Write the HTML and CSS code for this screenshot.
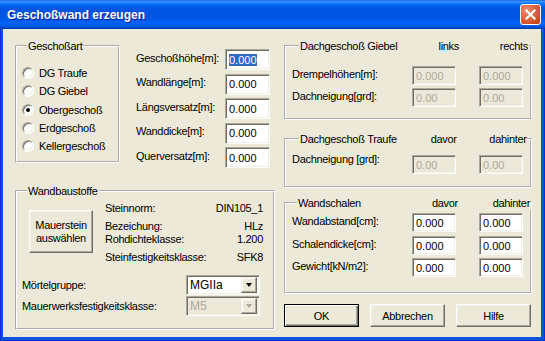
FILE: index.html
```html
<!DOCTYPE html>
<html>
<head>
<meta charset="utf-8">
<link rel="stylesheet" href="styles.css">
</head>
<body>
<div class="window">
  <div class="titlebar">
    <span class="title">Geschoßwand erzeugen</span>
    <span class="close"><svg width="19" height="19" viewBox="0 0 19 19"><path d="M5.5 5.5 L13.5 13.5 M13.5 5.5 L5.5 13.5" stroke="#fff" stroke-width="2.2" stroke-linecap="square"/></svg></span>
  </div>
  <div class="frame">
    <div class="client">
      <div class="col-left">
        <div class="top-left">
          <fieldset class="group g-art">
            <legend class="lg-art">Geschoßart</legend>
            <div class="radio"><span class="rb"></span><span>DG Traufe</span></div>
            <div class="radio"><span class="rb"></span><span>DG Giebel</span></div>
            <div class="radio"><span class="rb on"></span><span>Obergeschoß</span></div>
            <div class="radio"><span class="rb"></span><span>Erdgeschoß</span></div>
            <div class="radio"><span class="rb"></span><span>Kellergeschoß</span></div>
          </fieldset>
          <div class="fields">
            <div class="frow"><span class="flabel">Geschoßhöhe[m]:</span><span class="edit big"><span class="sel">0.000</span></span></div>
            <div class="frow"><span class="flabel">Wandlänge[m]:</span><span class="edit big">0.000</span></div>
            <div class="frow"><span class="flabel">Längsversatz[m]:</span><span class="edit big">0.000</span></div>
            <div class="frow"><span class="flabel">Wanddicke[m]:</span><span class="edit big">0.000</span></div>
            <div class="frow"><span class="flabel">Querversatz[m]:</span><span class="edit big">0.000</span></div>
          </div>
        </div>
        <fieldset class="group g-wb">
          <legend class="lg-art">Wandbaustoffe</legend>
          <div class="wb-top">
            <div class="btn btn-mauer">Mauerstein<br>auswählen</div>
            <div class="info">
              <div class="irow ir1"><span>Steinnorm:</span><span>DIN105_1</span></div>
              <div class="irow ir2"><span>Bezeichung:</span><span>HLz</span></div>
              <div class="irow ir3"><span>Rohdichteklasse:</span><span>1.200</span></div>
              <div class="irow ir4"><span>Steinfestigkeitsklasse:</span><span>SFK8</span></div>
            </div>
          </div>
          <div class="crow cr1"><span class="clabel">Mörtelgruppe:</span><div class="combo"><span class="ctext">MGIIa</span><span class="cbtn"><span class="tri"></span></span></div></div>
          <div class="crow cr2"><span class="clabel">Mauerwerksfestigkeitsklasse:</span><div class="combo dis"><span class="ctext">M5</span><span class="cbtn"><span class="tri"></span></span></div></div>
        </fieldset>
      </div>
      <div class="col-right">
        <fieldset class="group g-giebel">
          <legend class="lg lg-giebel"><span class="lt">Dachgeschoß Giebel</span><span class="lc1">links</span><span class="lc2">rechts</span></legend>
          <div class="rrow rr-d1"><span class="rlabel">Drempelhöhen[m]:</span><span class="edit dis">0.000</span><span class="edit dis">0.000</span></div>
          <div class="rrow rr-d2"><span class="rlabel">Dachneigung[grd]:</span><span class="edit dis">0.00</span><span class="edit dis">0.00</span></div>
        </fieldset>
        <fieldset class="group g-traufe">
          <legend class="lg lg-traufe"><span class="lt">Dachgeschoß Traufe</span><span class="lc1">davor</span><span class="lc2">dahinter</span></legend>
          <div class="rrow rr-t1"><span class="rlabel">Dachneigung [grd]:</span><span class="edit dis">0.00</span><span class="edit dis">0.00</span></div>
        </fieldset>
        <fieldset class="group g-schalen">
          <legend class="lg lg-schalen"><span class="lt">Wandschalen</span><span class="lc1">davor</span><span class="lc2">dahinter</span></legend>
          <div class="rrow rr-s1"><span class="rlabel">Wandabstand[cm]:</span><span class="edit">0.000</span><span class="edit">0.000</span></div>
          <div class="rrow rr-s2"><span class="rlabel">Schalendicke[cm]:</span><span class="edit">0.000</span><span class="edit">0.000</span></div>
          <div class="rrow rr-s3"><span class="rlabel">Gewicht[kN/m2]:</span><span class="edit">0.000</span><span class="edit">0.000</span></div>
        </fieldset>
        <div class="buttons">
          <div class="btn btn-ok">OK</div>
          <div class="btn">Abbrechen</div>
          <div class="btn">Hilfe</div>
        </div>
      </div>
    </div>
  </div>
</div>
</body>
</html>
```
FILE: styles.css
```css
* { box-sizing: border-box; }
html, body { margin: 0; padding: 0; }
body {
  width: 545px; height: 341px; overflow: hidden;
  font-family: "Liberation Sans", Arial, sans-serif;
  font-size: 11px; color: #000; letter-spacing: -0.3px;
  white-space: nowrap;
  background: #0855dd;
}
.window { width: 545px; height: 341px; display: flex; flex-direction: column; }
.titlebar {
  height: 29px; flex: none;
  display: flex; align-items: center; justify-content: space-between;
  padding: 0 4px 0 7px;
  background: linear-gradient(to bottom, #0a5ee8 0%, #3d95ff 4%, #2a8cff 8%, #0f75fb 12%, #0266f0 18%, #0058e6 26%, #0054e3 40%, #0055e6 60%, #005cf0 72%, #0364f6 82%, #0059e8 90%, #0047c4 96%, #003aa8 100%);
}
.title {
  color: #fff; font-weight: bold; font-size: 12px; letter-spacing: 0;
  text-shadow: 1px 1px 0 #0f1f8c;
  padding-top: 1px;
}
.close {
  width: 21px; height: 21px; display: flex; align-items: center; justify-content: center;
  border: 1px solid #fff; border-radius: 3px;
  background: radial-gradient(circle at 30% 30%, #ec8f72 0%, #de6a45 40%, #cc4a22 80%, #b93c18 100%);
}
.close svg { display: block; }
.frame {
  flex: 1; padding: 0 4px 4px 3px;
  background: #0855dd;
  box-shadow: inset 1px 0 0 #0831d9, inset -1px 0 0 #0831d9, inset 0 -1px 0 #0831d9;
}
.client {
  width: 538px; height: 308px;
  background: #ece9d8;
  display: flex; gap: 9px;
  padding: 10px 0 0 12px;
}
.col-left { width: 260px; display: flex; flex-direction: column; }
.col-right { width: 248px; display: flex; flex-direction: column; }
.top-left { display: flex; }

.group {
  margin: 0; padding: 0; min-width: 0;
  border: 2px groove #fff;
}
.group legend {
  line-height: 14px; height: 14px; padding: 0 1px; font-size: 11px;
}
.lg-art { margin-left: 5px; }

.g-art { width: 105px; height: 124px; padding: 11px 0 0 5px; }
.radio { display: flex; align-items: center; height: 18.3px; gap: 5px; }
.rb {
  width: 12px; height: 12px; border-radius: 50%; flex: none;
  background: #fff; position: relative;
  border: 1px solid; border-color: #aca899 #fff #fff #aca899;
  box-shadow: inset 1px 1px 0 #716f64, inset -1px -1px 0 #f1efe2;
}
.rb.on::after {
  content: ""; position: absolute; left: 3px; top: 3px; width: 4px; height: 4px;
  border-radius: 50%; background: #000;
}

.fields { margin-left: 16px; margin-top: 10px; display: flex; flex-direction: column; gap: 3.5px; }
.frow { display: flex; align-items: center; height: 21px; }
.flabel { width: 89px; margin-top: -4px; }

.edit {
  display: flex; align-items: center;
  width: 44px; height: 19px; padding: 0 0 0 3px;
  background: #fff; letter-spacing: 0;
  border: 1px solid; border-color: #aca899 #fff #fff #aca899;
  box-shadow: inset 1px 1px 0 #716f64, inset -1px -1px 0 #f1efe2;
}
.edit.big { width: 45px; height: 21px; }
.edit.dis { background: #ece9d8; color: #aca899; }
.sel { background: #316ac5; color: #fff; }

.g-wb { width: 260px; height: 146px; margin-top: 16px; padding: 0 0 0 5px; }
.wb-top { display: flex; }
.btn {
  display: flex; align-items: center; justify-content: center; text-align: center;
  background: #ece9d8;
  border: 1px solid; border-color: #fff #716f64 #716f64 #fff;
  box-shadow: inset -1px -1px 0 #aca899, inset 1px 1px 0 #f1efe2;
  width: 75px; height: 23px;
}
.btn-mauer { width: 64px; height: 43px; margin: 12px 0 0 7px; line-height: 13px; }
.info { width: 158px; margin-left: 12px; }
.irow { display: flex; justify-content: space-between; height: 13px; line-height: 13px; }
.ir1 { margin-top: 4px; }
.ir2 { margin-top: 5px; }
.ir3 { margin-top: 0; }
.ir4 { margin-top: 5px; }
.crow { display: flex; align-items: center; justify-content: space-between; width: 238px; }
.cr1 { margin-top: 11px; }
.cr2 { margin-top: 1px; }
.combo {
  width: 74px; height: 20px; display: flex; align-items: center; justify-content: space-between;
  padding: 2px 2px 2px 3px; background: #fff;
  border: 1px solid; border-color: #aca899 #fff #fff #aca899;
  box-shadow: inset 1px 1px 0 #716f64, inset -1px -1px 0 #f1efe2;
  font-size: 12px; letter-spacing: 0;
}
.combo.dis { background: #ece9d8; color: #aca899; }
.cbtn {
  width: 16px; height: 16px; display: flex; align-items: center; justify-content: center;
  background: #ece9d8;
  border: 1px solid; border-color: #f1efe2 #716f64 #716f64 #f1efe2;
  box-shadow: inset -1px -1px 0 #aca899, inset 1px 1px 0 #fff;
}
.tri { width: 0; height: 0; border-left: 3.5px solid transparent; border-right: 3.5px solid transparent; border-top: 4px solid #000; }
.combo.dis .tri { border-top-color: #aca899; }

.lg { display: flex; }
.lg .lt { flex: 1; }
.lg .lc1, .lg .lc2 { text-align: right; flex: none; }
.lg-giebel { width: 230px; margin-left: 7px; }
.lg-giebel .lc1 { width: 60px; }
.lg-giebel .lc2 { width: 69px; }
.lg-traufe { width: 228px; margin-left: 7px; }
.lg-traufe .lc1 { width: 60px; }
.lg-traufe .lc2 { width: 70px; }
.lg-schalen { width: 234px; margin-left: 5px; }
.lg-schalen .lc1 { width: 60px; }
.lg-schalen .lc2 { width: 72px; }

.g-giebel { height: 81px; padding: 0 0 0 6px; }
.g-traufe { height: 56px; margin-top: 12px; padding: 0 0 0 6px; }
.g-schalen { height: 98px; margin-top: 8px; padding: 0 0 0 6px; }
.rrow { display: flex; align-items: center; height: 19px; }
.rlabel { width: 120px; margin-top: -4px; }
.rrow .edit + .edit { margin-left: 23px; }
.rr-d1 { margin-top: 13px; }
.rr-d2 { margin-top: 3px; }
.rr-t1 { margin-top: 9px; }
.rr-t1 .rlabel { margin-top: -12px; }
.rr-s1 { margin-top: 3px; }
.rr-s2 { margin-top: 4px; }
.rr-s3 { margin-top: 3px; }

.buttons { display: flex; justify-content: space-between; width: 247px; margin-top: 10px; }
.btn-ok {
  border: 1px solid #000;
  box-shadow: inset 1px 1px 0 #fff, inset -1px -1px 0 #716f64, inset -2px -2px 0 #aca899;
}
```
